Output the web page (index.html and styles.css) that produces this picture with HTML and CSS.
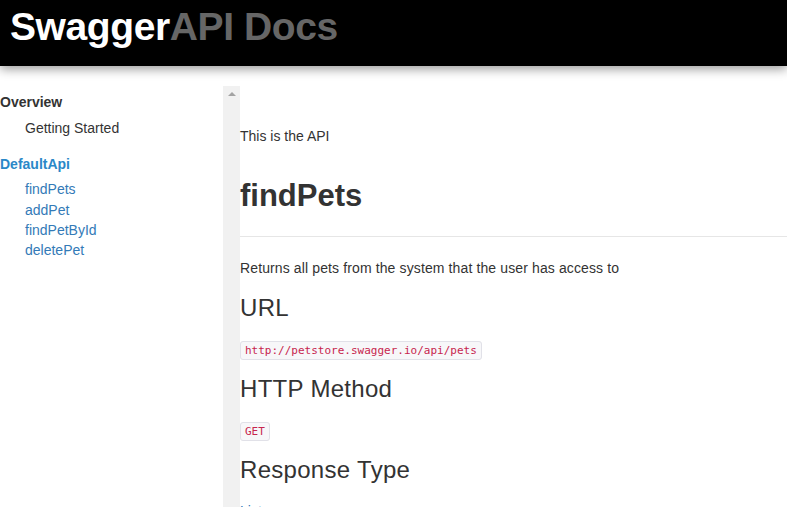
FILE: index.html
```html
<!DOCTYPE html>
<html>
<head>
<meta charset="utf-8">
<title>Swagger API Docs</title>
<link rel="stylesheet" href="styles.css">
</head>
<body>
<header class="topbar">
  <div class="brand"><span class="brand-main">Swagger</span><span class="brand-sub">API Docs</span></div>
</header>
<div class="layout">
  <nav class="sidebar">
    <div class="nav-content">
      <div class="nav-group">Overview</div>
      <ul class="nav-list first">
        <li><span class="nav-plain">Getting Started</span></li>
      </ul>
      <div class="nav-group api">DefaultApi</div>
      <ul class="nav-list">
        <li><a href="#findPets">findPets</a></li>
        <li><a href="#addPet">addPet</a></li>
        <li><a href="#findPetById">findPetById</a></li>
        <li><a href="#deletePet">deletePet</a></li>
      </ul>
    </div>
    <div class="scrollbar"><span class="arrow-up"></span></div>
  </nav>
  <main class="content">
    <p class="intro">This is the API</p>
    <h1 class="method-title" id="findPets">findPets</h1>
    <hr class="rule">
    <p class="desc">Returns all pets from the system that the user has access to</p>
    <h2>URL</h2>
    <p><code>http://petstore.swagger.io/api/pets</code></p>
    <h2>HTTP Method</h2>
    <p><code>GET</code></p>
    <h2>Response Type</h2>
    <p><a href="#Pet">List</a></p>
  </main>
</div>
</body>
</html>
```

FILE: styles.css
```css
html, body {
  margin: 0;
  padding: 0;
  background: #fff;
  height: 100%;
  overflow: hidden;
}
body {
  font-family: "Liberation Sans", Arial, sans-serif;
  font-size: 14px;
  line-height: 20px;
  color: #333;
}
a {
  color: #337ab7;
  text-decoration: none;
}
.topbar {
  height: 66px;
  background: #000;
  box-shadow: 0 3px 10px rgba(0, 0, 0, 0.4);
  position: relative;
  z-index: 1;
  box-sizing: border-box;
  padding: 7px 0 0 10px;
}
.brand {
  font-size: 39px;
  line-height: 39px;
  font-weight: bold;
  letter-spacing: -0.4px;
}
.brand-main { color: #fff; }
.brand-sub { color: #666; }

.layout {
  display: flex;
  margin-top: 20px;
  height: calc(100% - 86px);
}
.sidebar {
  width: 240px;
  flex: 0 0 240px;
  display: flex;
}
.nav-content {
  flex: 1;
  padding-top: 6px;
}
.nav-group {
  font-weight: bold;
  color: #333;
}
.nav-group.api {
  color: #2a88c8;
  margin-top: 16px;
}
.nav-list {
  list-style: none;
  margin: 0;
  padding: 0 0 0 25px;
}
.nav-list.first { margin-top: 6px; }
.nav-list:not(.first) { margin-top: 5px; }
.nav-list li { line-height: 20.3px; }
.nav-plain { color: #333; }
.scrollbar {
  width: 17px;
  flex: 0 0 17px;
  background: #f1f1f1;
  display: flex;
  justify-content: center;
  padding-top: 6px;
  box-sizing: border-box;
}
.arrow-up {
  width: 0;
  height: 0;
  border-left: 4px solid transparent;
  border-right: 4px solid transparent;
  border-bottom: 4px solid #a3a3a3;
}

.content {
  flex: 1;
  min-width: 0;
}
.content p {
  margin: 0;
}
.content .intro {
  margin-top: 40px;
}
.content .desc {
  letter-spacing: 0.12px;
}
.method-title {
  font-size: 31px;
  line-height: 34px;
  font-weight: bold;
  margin: 33px 0 0;
  color: #333;
}
.rule {
  border: 0;
  border-top: 1px solid #e6e6e6;
  margin: 23px 0 21px;
  height: 0;
}
h2 {
  font-size: 24px;
  line-height: 28px;
  font-weight: normal;
  letter-spacing: 0.3px;
  margin: 16px 0 17px;
  color: #333;
}
code {
  font-family: "DejaVu Sans Mono", "Liberation Mono", monospace;
  font-size: 11px;
  line-height: 1;
  color: #c7254e;
  background: #f7f7f9;
  border: 1px solid #e1e1e8;
  border-radius: 3px;
  padding: 2px 4px;
}
```
